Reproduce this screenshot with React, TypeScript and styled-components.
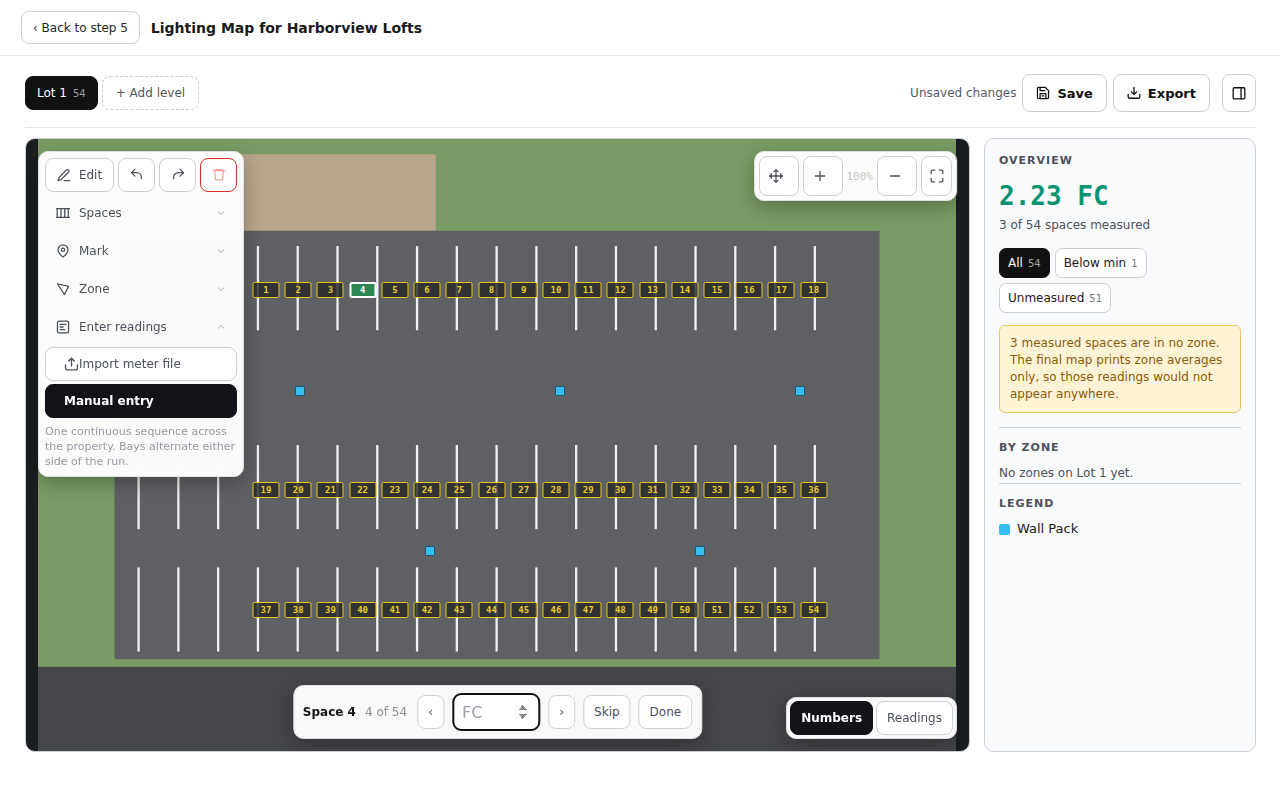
import React, { useState } from "react";
import styled, { createGlobalStyle, css } from "styled-components";

const SANS = `"DejaVu Sans", "Liberation Sans", sans-serif`;
const MONO = `"DejaVu Sans Mono", "Liberation Mono", monospace`;

const GlobalStyle = createGlobalStyle`
  *, *::before, *::after { box-sizing: border-box; }
  body { margin: 0; background: #fff; color: #1a1a1a; font-family: ${SANS}; font-size: 12px; }
  button, input { font-family: inherit; }
  h1, h2, p { margin: 0; }
`;

/* ---------- page frame ---------- */

const Page = styled.div`
  display: flex;
  flex-direction: column;
  min-height: 100vh;
`;

const Header = styled.header`
  display: flex;
  align-items: center;
  gap: 11px;
  height: 56px;
  padding: 0 21px;
  border-bottom: 1px solid #e5e5e5;
`;

const Title = styled.h1`
  font-size: 14px;
  font-weight: 700;
  line-height: 20px;
`;

const Main = styled.main`
  display: flex;
  flex: 1;
  flex-direction: column;
  padding: 18px 24px 48px 25px;
`;

const Toolbar = styled.div`
  display: flex;
  align-items: center;
  justify-content: space-between;
  padding-bottom: 15px;
  border-bottom: 1px solid #e5e5e5;
  margin-bottom: 10px;
`;

const ToolbarGroup = styled.div<{ $gap: number }>`
  display: flex;
  align-items: center;
  gap: ${(p) => p.$gap}px;
`;

const Status = styled.span`
  color: #555b66;
`;

const Workspace = styled.div`
  display: flex;
  flex: 1;
  gap: 14px;
`;

/* ---------- buttons ---------- */

const Button = styled.button<{ $tone?: "dark" | "danger"; $w?: number; $h?: number; $pad?: number }>`
  display: inline-flex;
  align-items: center;
  justify-content: center;
  gap: 8px;
  height: ${(p) => p.$h ?? 34}px;
  width: ${(p) => (p.$w ? `${p.$w}px` : "auto")};
  padding: 0 ${(p) => (p.$w ? 0 : p.$pad ?? 10)}px;
  border: 1px solid #cdcfd8;
  border-radius: 8px;
  background: #fff;
  color: #4b505b;
  font-size: 12px;
  white-space: nowrap;
  cursor: pointer;
  ${(p) =>
    p.$tone === "dark" &&
    css`
      border-color: #121318;
      background: #121318;
      color: #fff;
      font-weight: 700;
    `}
  ${(p) =>
    p.$tone === "danger" &&
    css`
      border-color: #dc2f26;
      color: #f8a09a;
    `}
`;

const BackButton = styled(Button)`
  height: 33px;
  color: #24262b;
`;

const StrongButton = styled(Button)`
  gap: 7px;
  color: #111;
  font-weight: 700;
  font-size: 13px;
`;

const LevelTab = styled(Button)`
  border-color: #111;
  background: #111;
  color: #fff;
`;

const TabCount = styled.span`
  color: #9a9da5;
  font-size: 10px;
  margin-left: -2px;
`;

const AddLevel = styled(Button)`
  border-style: dashed;
  border-color: #c9cacf;
  color: #555;
`;

const SideToggle = styled(Button)`
  margin-left: 6px;
  color: #111;
`;

/* ---------- stage ---------- */

const Stage = styled.section`
  position: relative;
  display: flex;
  flex: 1;
  justify-content: center;
  min-width: 0;
  min-height: 614px;
  padding-right: 1px;
  overflow: hidden;
  border: 1px solid #cdcfd8;
  border-radius: 10px;
  background: #1a1e21;
`;

const Plan = styled.div`
  position: relative;
  flex: none;
  aspect-ratio: 3 / 2;
`;

const Aerial = styled.svg`
  display: block;
  width: 100%;
  height: 100%;
`;

const Pin = styled.div`
  position: absolute;
  display: flex;
  transform: translate(-50%, -50%);
`;

const SpaceChip = styled.button<{ $active: boolean }>`
  width: 27px;
  height: 16px;
  padding: 0;
  border: ${(p) => (p.$active ? "2px solid #fff" : "1px solid #eac81f")};
  border-radius: 2px;
  background: ${(p) => (p.$active ? "#2c8850" : "rgba(39, 40, 42, 0.82)")};
  color: ${(p) => (p.$active ? "#fff" : "#eacb28")};
  font-family: ${MONO};
  font-size: 9px;
  font-weight: 700;
  line-height: 12px;
  cursor: pointer;
`;

const Fixture = styled.span`
  width: 10px;
  height: 10px;
  border: 1px solid #1f5872;
  border-radius: 1px;
  background: #37bdf1;
`;

const floating = css`
  position: absolute;
  border: 1px solid #dfe0e4;
  border-radius: 10px;
  background: rgba(255, 255, 255, 0.97);
  backdrop-filter: blur(8px);
  box-shadow: 0 6px 20px rgba(0, 0, 0, 0.28);
`;

const ToolPanel = styled.div`
  ${floating}
  top: 12px;
  left: 12px;
  display: flex;
  flex-direction: column;
  gap: 4px;
  width: 206px;
  padding: 6px;
`;

const ToolRow = styled.div`
  display: flex;
  gap: 4px;
`;

const EditButton = styled(Button)`
  flex: 1;
`;

const MenuRow = styled.button`
  display: flex;
  align-items: center;
  gap: 9px;
  height: 34px;
  padding: 0 11px;
  border: 0;
  border-radius: 8px;
  background: transparent;
  color: #4b505b;
  font-size: 12px;
  text-align: left;
  cursor: pointer;
`;

const MenuLabel = styled.span`
  flex: 1;
`;

const Chevron = styled.span`
  display: flex;
  color: #a5a7ae;
`;

const MenuGroup = styled.div`
  display: flex;
  flex-direction: column;
  gap: 3px;
`;

const SubAction = styled(Button)`
  justify-content: flex-start;
  gap: 0;
  padding: 0 18px;
`;

const Hint = styled.p`
  padding: 3px 0 1px;
  color: #9699a4;
  font-size: 11px;
  line-height: 15px;
`;

const ZoomPanel = styled.div`
  ${floating}
  top: 12px;
  right: 12px;
  display: flex;
  align-items: center;
  gap: 4px;
  padding: 4px;
`;

const ZoomButton = styled(Button)`
  width: 40px;
  height: 40px;
  padding: 0 5px 0 0;
`;

const ZoomLevel = styled.span`
  color: #c3c5c1;
  font-family: ${MONO};
  font-size: 11px;
`;

const ViewPanel = styled.div`
  ${floating}
  right: 12px;
  bottom: 12px;
  display: flex;
  gap: 3px;
  padding: 3px;
`;

const EntryBar = styled.form`
  ${floating}
  bottom: 12px;
  left: 50%;
  display: flex;
  align-items: center;
  gap: 8px;
  padding: 7px 9px;
  transform: translateX(-50%);
  white-space: nowrap;
`;

const SpaceInfo = styled.div`
  display: flex;
  gap: 9px;
  padding-right: 2px;
`;

const SpaceName = styled.strong`
  color: #121318;
  font-size: 12px;
`;

const SpaceOrder = styled.span`
  color: #8e8e8e;
  font-size: 12px;
`;

const ReadingInput = styled.input`
  width: 88px;
  height: 38px;
  padding: 0 8px;
  border: 2px solid #111;
  border-radius: 9px;
  outline: none;
  background: #fff;
  color: #121318;
  font-size: 16px;
  &::placeholder { color: #9ca0ab; }
  &::-webkit-inner-spin-button { opacity: 1; }
`;

/* ---------- side panel ---------- */

const Side = styled.aside`
  display: flex;
  flex-direction: column;
  flex: none;
  width: 272px;
  padding: 14px;
  border: 1px solid #cdcfd8;
  border-radius: 10px;
  background: #f9fafc;
`;

const SideHeading = styled.h2`
  color: #4b505b;
  font-size: 11px;
  font-weight: 700;
  letter-spacing: 1px;
  line-height: 16px;
`;

const BigReading = styled.p`
  margin-top: 10px;
  color: #0b9370;
  font-family: ${MONO};
  font-size: 26px;
  font-weight: 700;
  line-height: 34px;
`;

const SideText = styled.p`
  color: #4b505b;
  font-size: 12px;
`;

const Summary = styled(SideText)`
  margin-top: 4px;
  line-height: 16px;
`;

const ZoneNote = styled(SideText)`
  margin-top: 8px;
  line-height: 19px;
`;

const Filters = styled.div`
  display: flex;
  flex-wrap: wrap;
  gap: 5px;
  margin: 15px 0 12px;
`;

const FilterPill = styled.button<{ $active?: boolean }>`
  display: inline-flex;
  align-items: center;
  gap: 5px;
  height: 30px;
  padding: 0 8px;
  border: 1px solid ${(p) => (p.$active ? "#111" : "#cdcfd8")};
  border-radius: 7px;
  background: ${(p) => (p.$active ? "#111" : "#fff")};
  color: ${(p) => (p.$active ? "#fff" : "#1a1a1a")};
  font-size: 12px;
  cursor: pointer;
`;

const PillCount = styled.span<{ $active?: boolean }>`
  color: ${(p) => (p.$active ? "#a5a5a5" : "#777")};
  font-size: 10px;
`;

const Warning = styled.p`
  padding: 9px 10px;
  border: 1px solid #e8c766;
  border-radius: 6px;
  background: #fff3d6;
  color: #8a5a0a;
  font-size: 12px;
  line-height: 17px;
`;

const SideSection = styled.section<{ $space?: number }>`
  display: flex;
  flex-direction: column;
  margin-top: ${(p) => p.$space ?? 0}px;
  padding-top: 12px;
  border-top: 1px solid #cdcfd8;
`;

const LegendItem = styled.div`
  display: flex;
  align-items: center;
  gap: 7px;
  margin-top: 8px;
  font-size: 13px;
  line-height: 18px;
`;

const Swatch = styled.span`
  width: 11px;
  height: 11px;
  border-radius: 2px;
  background: #37bdf1;
`;

/* ---------- icons ---------- */

function Icon({ size = 14, stroke = 2.2, children }: { size?: number; stroke?: number; children: React.ReactNode }) {
  return (
    <svg
      width={size}
      height={size}
      viewBox="0 0 24 24"
      fill="none"
      stroke="currentColor"
      strokeWidth={stroke}
      strokeLinecap="round"
      strokeLinejoin="round"
      aria-hidden="true"
    >
      {children}
    </svg>
  );
}

const icons = {
  save: (
    <>
      <path d="M4.5 2.5H16L21.5 8v11.5a2 2 0 0 1-2 2h-15a2 2 0 0 1-2-2v-15a2 2 0 0 1 2-2z" />
      <path d="M7 3v5h8.500M7 21v-8h10v8M10.500 17h3" />
    </>
  ),
  download: <path d="M12 2.500v12M7.500 10l4.500 4.500 4.500-4.500M2 14.500v4a2.500 2.500 0 0 0 2.500 2.500h15a2.500 2.500 0 0 0 2.500-2.500v-4" />,
  upload: <path d="M12 14V2M7.500 6.500 12 2l4.500 4.500M2.500 12.500v5.500a2.500 2.500 0 0 0 2.500 2.500h14a2.500 2.500 0 0 0 2.500-2.500v-5.500" />,
  sidebar: (
    <>
      <rect x="2" y="3" width="20" height="19" rx="2" />
      <path d="M15.500 3v19" />
    </>
  ),
  edit: <path d="M12.500 21.500H22M16 3.500a2.500 2.500 0 0 1 3.700 3.700L7 20l-5 1.500L3.500 16.500z" />,
  undo: <path d="M8.500 2 2.500 8l6 6M2.500 8h9a8 8 0 0 1 8 8v2" />,
  redo: <path d="m15.500 2 6 6-6 6M21.500 8h-9a8 8 0 0 0-8 8v2" />,
  trash: <path d="M2 4.500h20M6.500 3h11M4.500 4.500 6 20.500h12l1.500-16" />,
  spaces: <path d="M1 4.500h22M1 19.500h22M2 4.500v15M8.500 4.500v15M15 4.500v15M21 4.500v15" />,
  mark: (
    <>
      <path d="M20.500 10c0 5.500-8.500 12.500-8.500 12.500S3.500 15.500 3.500 10a8.500 8.500 0 0 1 17 0z" />
      <circle cx="12" cy="10" r="2.800" />
    </>
  ),
  zone: <path d="M2.500 3 21.500 7.500 14.500 21.500z" />,
  readings: (
    <>
      <rect x="2.500" y="2" width="19" height="20" rx="2.500" />
      <path d="M7 7.500h10M7 12h5M7 16.500h8" />
    </>
  ),
  move: <path d="M12 1v22M1 12h22M8.500 4.500 12 1l3.500 3.500M8.500 19.500 12 23l3.500-3.500M4.500 8.500 1 12l3.500 3.500M19.500 8.500 23 12l-3.500 3.500" />,
  plus: <path d="M12 4v16M4 12h16" />,
  minus: <path d="M4 12h16" />,
  fit: <path d="M8 2H4a2 2 0 0 0-2 2v4M16 2h4a2 2 0 0 1 2 2v4M22 16v4a2 2 0 0 1-2 2h-4M8 22H4a2 2 0 0 1-2-2v-4" />,
  down: <path d="m5 9 7 6.500L19 9" />,
  up: <path d="m5 15 7-6.500 7 6.500" />,
};

/* ---------- site data, in plan units (1200 x 800) ---------- */

const PLAN_W = 1200;
const PLAN_H = 800;
const stripeRows = [140, 400, 560];
const spaceRows = [198, 459, 616];
const fixtures = [
  [342, 329],
  [682, 329],
  [996, 329],
  [512, 538],
  [865, 538],
];
const spaces = spaceRows.flatMap((y, row) =>
  Array.from({ length: 18 }, (_, i) => ({ n: row * 18 + i + 1, x: 298 + (i * 716) / 17, y }))
);

const place = (x: number, y: number) => ({ left: `${(x / PLAN_W) * 100}%`, top: `${(y / PLAN_H) * 100}%` });

function SitePlan({ active, onPick }: { active: number; onPick: (n: number) => void }) {
  return (
    <Plan>
      <Aerial viewBox={`0 0 ${PLAN_W} ${PLAN_H}`} role="img" aria-label="Aerial view of Lot 1">
        <rect width="1200" height="800" fill="#7a9b65" />
        <rect x="200" y="20" width="320" height="100" fill="#b8a78c" />
        <rect x="100" y="120" width="1000" height="560" fill="#5f6063" />
        <rect y="690" width="1200" height="110" fill="#454649" />
        {stripeRows.map((y) =>
          Array.from({ length: 18 }, (_, i) => (
            <rect key={`${y}-${i}`} x={130 + i * 52} y={y} width="3" height="110" fill="#f0f0f0" />
          ))
        )}
      </Aerial>
      {fixtures.map(([x, y]) => (
        <Pin key={`${x}-${y}`} style={place(x, y)}>
          <Fixture />
        </Pin>
      ))}
      {spaces.map((s) => (
        <Pin key={s.n} style={place(s.x, s.y)}>
          <SpaceChip type="button" $active={s.n === active} onClick={() => onPick(s.n)}>
            {s.n}
          </SpaceChip>
        </Pin>
      ))}
    </Plan>
  );
}

const menu = [
  { label: "Spaces", icon: icons.spaces },
  { label: "Mark", icon: icons.mark },
  { label: "Zone", icon: icons.zone },
];

export default function App() {
  const [active, setActive] = useState(4);
  const total = spaces.length;

  return (
    <Page>
      <GlobalStyle />
      <Header>
        <BackButton type="button" $pad={11}>‹ Back to step 5</BackButton>
        <Title>Lighting Map for Harborview Lofts</Title>
      </Header>
      <Main>
        <Toolbar>
          <ToolbarGroup $gap={4}>
            <LevelTab type="button" $pad={11}>
              Lot 1 <TabCount>54</TabCount>
            </LevelTab>
            <AddLevel type="button" $pad={13}>+ Add level</AddLevel>
          </ToolbarGroup>
          <ToolbarGroup $gap={6}>
            <Status>Unsaved changes</Status>
            <StrongButton type="button" $h={38} $pad={13}>
              <Icon>{icons.save}</Icon>Save
            </StrongButton>
            <StrongButton type="button" $h={38} $pad={13}>
              <Icon>{icons.download}</Icon>Export
            </StrongButton>
            <SideToggle type="button" $w={34} $h={38} aria-label="Toggle side panel">
              <Icon>{icons.sidebar}</Icon>
            </SideToggle>
          </ToolbarGroup>
        </Toolbar>

        <Workspace>
          <Stage>
            <SitePlan active={active} onPick={setActive} />

            <ToolPanel>
              <ToolRow>
                <EditButton type="button">
                  <Icon>{icons.edit}</Icon>Edit
                </EditButton>
                <Button type="button" $w={37} aria-label="Undo"><Icon>{icons.undo}</Icon></Button>
                <Button type="button" $w={37} aria-label="Redo"><Icon>{icons.redo}</Icon></Button>
                <Button type="button" $w={37} $tone="danger" aria-label="Delete"><Icon>{icons.trash}</Icon></Button>
              </ToolRow>
              {menu.map((m) => (
                <MenuRow key={m.label} type="button">
                  <Icon>{m.icon}</Icon>
                  <MenuLabel>{m.label}</MenuLabel>
                  <Chevron><Icon size={10}>{icons.down}</Icon></Chevron>
                </MenuRow>
              ))}
              <MenuGroup>
                <MenuRow type="button" aria-expanded="true">
                  <Icon>{icons.readings}</Icon>
                  <MenuLabel>Enter readings</MenuLabel>
                  <Chevron><Icon size={10}>{icons.up}</Icon></Chevron>
                </MenuRow>
                <SubAction type="button">
                  <Icon size={15}>{icons.upload}</Icon>Import meter file
                </SubAction>
                <SubAction type="button" $tone="dark">Manual entry</SubAction>
                <Hint>One continuous sequence across the property. Bays alternate either side of the run.</Hint>
              </MenuGroup>
            </ToolPanel>

            <ZoomPanel>
              <ZoomButton type="button" aria-label="Pan"><Icon>{icons.move}</Icon></ZoomButton>
              <ZoomButton type="button" aria-label="Zoom in"><Icon>{icons.plus}</Icon></ZoomButton>
              <ZoomLevel>100%</ZoomLevel>
              <ZoomButton type="button" aria-label="Zoom out"><Icon>{icons.minus}</Icon></ZoomButton>
              <Button type="button" $w={31} $h={40} aria-label="Fit to view"><Icon>{icons.fit}</Icon></Button>
            </ZoomPanel>

            <EntryBar onSubmit={(e) => e.preventDefault()}>
              <SpaceInfo>
                <SpaceName>Space {active}</SpaceName>
                <SpaceOrder>{active} of {total}</SpaceOrder>
              </SpaceInfo>
              <Button type="button" $w={27} aria-label="Previous space" onClick={() => setActive(Math.max(1, active - 1))}>‹</Button>
              <ReadingInput type="number" placeholder="FC" aria-label="Foot-candle reading" autoFocus />
              <Button type="button" $w={27} aria-label="Next space" onClick={() => setActive(Math.min(total, active + 1))}>›</Button>
              <Button type="button">Skip</Button>
              <Button type="button">Done</Button>
            </EntryBar>

            <ViewPanel>
              <Button type="button" $tone="dark">Numbers</Button>
              <Button type="button">Readings</Button>
            </ViewPanel>
          </Stage>

          <Side>
            <SideHeading>OVERVIEW</SideHeading>
            <BigReading>2.23 FC</BigReading>
            <Summary>3 of 54 spaces measured</Summary>
            <Filters>
              <FilterPill type="button" $active>All <PillCount $active>54</PillCount></FilterPill>
              <FilterPill type="button">Below min <PillCount>1</PillCount></FilterPill>
              <FilterPill type="button">Unmeasured <PillCount>51</PillCount></FilterPill>
            </Filters>
            <Warning>
              3 measured spaces are in no zone. The final map prints zone averages only, so those readings would not
              appear anywhere.
            </Warning>
            <SideSection $space={14}>
              <SideHeading>BY ZONE</SideHeading>
              <ZoneNote>No zones on Lot 1 yet.</ZoneNote>
            </SideSection>
            <SideSection>
              <SideHeading>LEGEND</SideHeading>
              <LegendItem><Swatch />Wall Pack</LegendItem>
            </SideSection>
          </Side>
        </Workspace>
      </Main>
    </Page>
  );
}
